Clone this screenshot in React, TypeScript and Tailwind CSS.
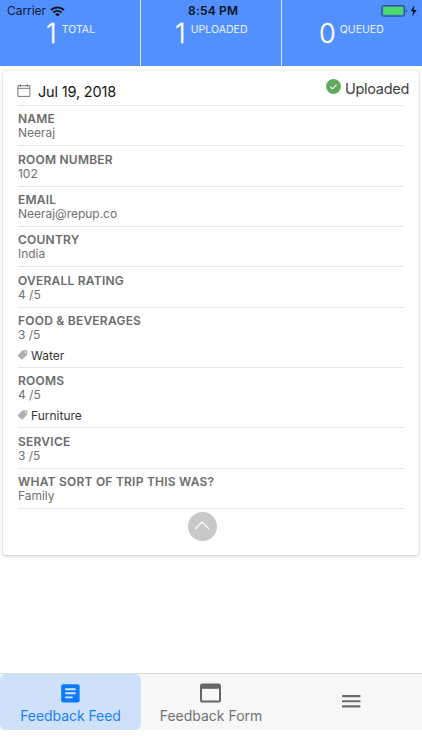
import React from "react";

const stats = [
  { value: "1", label: "TOTAL", pad: "pl-[46px]", gap: "gap-[5px]", width: "w-[141px]" },
  { value: "1", label: "UPLOADED", pad: "pl-[34px]", gap: "gap-[5px]", width: "w-[141px]" },
  { value: "0", label: "QUEUED", pad: "pl-[37px]", gap: "gap-[4px]", width: "w-[140px]" },
];

const answers: { label: string; value: string; tag?: string }[] = [
  { label: "NAME", value: "Neeraj" },
  { label: "ROOM NUMBER", value: "102" },
  { label: "EMAIL", value: "Neeraj@repup.co" },
  { label: "COUNTRY", value: "India" },
  { label: "OVERALL RATING", value: "4 /5" },
  { label: "FOOD & BEVERAGES", value: "3 /5", tag: "Water" },
  { label: "ROOMS", value: "4 /5", tag: "Furniture" },
  { label: "SERVICE", value: "3 /5" },
  { label: "WHAT SORT OF TRIP THIS WAS?", value: "Family" },
];

function StatusBar() {
  return (
    <div className="flex h-[22px] items-center pl-[7px] pr-[4px] text-[12px] leading-[22px] text-[#101a30]">
      <span className="w-[43px] tracking-[-0.05px]">Carrier</span>
      <svg width="15" height="11" viewBox="0 0 15 11" fill="none" stroke="#081020">
        <path d="M1 4.1C4.7.6 10.3.6 14 4.1" strokeWidth="2" />
        <path d="M3.4 6.5c2.3-2.2 5.9-2.2 8.2 0" strokeWidth="1.9" />
        <path d="M5.1 8.2c1.3-1.2 3.5-1.2 4.8 0L7.5 10.6Z" fill="#081020" stroke="none" />
      </svg>
      <span className="ml-[123px] w-[60px] whitespace-nowrap font-semibold tracking-[0.2px] text-[#081020]">8:54 PM</span>
      <svg className="ml-auto" width="37" height="13" viewBox="0 0 37 13">
        <rect x=".7" y=".6" width="23" height="10.6" rx="1.8" fill="#3f7fcf" stroke="#264f9c" />
        <rect x="2.2" y="2" width="20" height="7.8" rx=".8" fill="#4cd964" />
        <path d="M25 4.2c1.4.4 1.4 3 0 3.4Z" fill="#264f9c" />
        <path d="M33.6.3 29.5 6.3h2.8l-1 5 4.4-6.4h-3Z" fill="#081020" />
      </svg>
    </div>
  );
}

function Header() {
  return (
    <header className="relative h-[66.4px] bg-[#5390ff]">
      <div className="flex h-full divide-x divide-[#dce8ff]">
        {stats.map((s) => (
          <div key={s.label} className={`flex pt-[18px] text-white ${s.width} ${s.pad} ${s.gap}`}>
            <span className="text-[27px] font-light leading-[32px] [-webkit-text-stroke:0.3px_white]">{s.value}</span>
            <span className="text-[10.5px] leading-[23px] tracking-[0.05px] text-[#edf3ff]">{s.label}</span>
          </div>
        ))}
      </div>
      <div className="absolute inset-x-0 top-0">
        <StatusBar />
      </div>
    </header>
  );
}

function TagIcon() {
  return (
    <svg className="-ml-px" width="11" height="10" viewBox="-1 0 11 10" fill="#b0b0b0">
      <path
        fillRule="evenodd"
        d="M4.6.6 8.6.3c.5 0 .9.3.9.8l-.3 3.3c0 .3-.1.5-.3.7L4.7 9.2c-.4.4-.9.4-1.3 0L0 6.2c-.4-.4-.4-.9 0-1.3L3.9.9c.2-.2.4-.3.7-.3ZM7.6 1.6a.7.7 0 1 0 0 1.4.7.7 0 0 0 0-1.4Z"
      />
    </svg>
  );
}

function Card() {
  return (
    <section className="mx-[3px] mt-[5px] h-[483.6px] rounded-[2px] bg-white px-[15px] shadow-[0_0_2px_rgba(0,0,0,0.28),0_2px_3px_rgba(0,0,0,0.1)]">
      <div className="flex h-[34.6px] border-b border-[#e6e6e6]">
        <svg className="mt-[12.6px] -ml-px" width="14" height="13" viewBox="0 0 14 13" fill="none" stroke="#555" strokeWidth=".8">
          <path d="M.9 1.7h12v10.7H.9ZM.9 4.3h12M3.5.2v2.4M10.3.2v2.4" />
        </svg>
        <span className="ml-[7px] mt-[9.6px] text-[14.5px] leading-[22px] tracking-[-0.17px] text-[#161616]">Jul 19, 2018</span>
        <div className="-mr-[5px] ml-auto flex">
          <svg className="mt-[7.6px]" width="15" height="15" viewBox="0 0 15 15">
            <circle cx="7.5" cy="7.5" r="7.4" fill="#60a85e" />
            <path d="m4.2 7.7 2.2 2.2 4.2-4.3" fill="none" stroke="#eef8ed" strokeWidth="1.1" />
          </svg>
          <span className="ml-[4px] mt-[6.6px] text-[14.5px] leading-[22px] tracking-[-0.3px] text-[#404040]">Uploaded</span>
        </div>
      </div>
      {answers.map((a) => (
        <div
          key={a.label}
          className={`border-b border-[#e6e6e6] pt-[5.3px] text-[12px] text-[#6b6b6b] ${a.tag ? "h-[60.33px]" : "h-[40.33px]"}`}
        >
          <div className="whitespace-nowrap font-semibold leading-[15px] tracking-[0.23px]">{a.label}</div>
          <div className="leading-[14.6px] tracking-[-0.02px] text-[#707070]">{a.value}</div>
          {a.tag && (
            <div className="mt-[4px] flex items-center gap-[3px] leading-[17px] text-[#363636]">
              <TagIcon />
              <span>{a.tag}</span>
            </div>
          )}
        </div>
      ))}
      <button className="mx-auto mt-[3px] flex h-[29px] w-[29px] translate-x-[-9px] items-center justify-center rounded-full bg-[#c8c8c8]">
        <svg className="-mt-px" width="16" height="9" viewBox="0 0 16 9" fill="none" stroke="#fff" strokeWidth="1.2">
          <path d="m1 8 7-7 7 7" />
        </svg>
      </button>
    </section>
  );
}

function TabBar() {
  return (
    <nav className="mt-auto mb-[20px] flex h-[57px] border-t border-[#dedede] bg-[#f7f7f7] text-[14px] leading-[18px] text-[#727272]">
      <div className="flex w-[141px] flex-col items-center rounded-[6px] bg-[#cee1f9] pt-[10px] text-[#1c80f5]">
        <svg width="19" height="19" viewBox="0 0 19 19">
          <rect x=".2" y=".3" width="18.4" height="18.2" rx="2" fill="#0a7aff" />
          <path d="M4.2 5.2h10.4M4.2 9.3h10.4M4.2 13.4h7.4" stroke="#d5e7fd" strokeWidth="1.9" />
        </svg>
        <span className="mt-[4px] whitespace-nowrap tracking-[-0.06px]">Feedback Feed</span>
      </div>
      <div className="flex w-[140px] flex-col items-center pt-[9px]">
        <svg className="-ml-px" width="21" height="20" viewBox="0 0 21 20">
          <rect x="1" y="1.6" width="19" height="16.9" rx="1.6" fill="none" stroke="#656565" strokeWidth="2" />
          <path d="M1 1.4h19v4.4H1Z" fill="#656565" />
        </svg>
        <span className="mt-[4px] whitespace-nowrap">Feedback Form</span>
      </div>
      <div className="flex w-[141px] justify-center pt-[21px]">
        <svg width="19" height="13" viewBox="0 0 19 13" fill="#6d6d6d">
          <path d="M0 .1h18.4v2.1H0ZM0 5.2h18.4v2.1H0ZM0 10.3h18.4v2.1H0Z" />
        </svg>
      </div>
    </nav>
  );
}

export default function App() {
  return (
    <main className="flex h-[750px] w-[422px] flex-col overflow-hidden bg-white font-['Inter','Liberation_Sans',sans-serif]">
      <Header />
      <Card />
      <TabBar />
    </main>
  );
}
